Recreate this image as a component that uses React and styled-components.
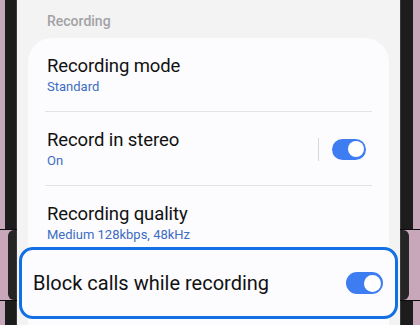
import React from "react";
import styled, { createGlobalStyle } from "styled-components";

const GlobalStyle = createGlobalStyle`
  html, body {
    margin: 0;
    padding: 0;
    background: #c9a7ba;
  }
  body {
    font-family: Roboto, "Noto Sans", "Liberation Sans", sans-serif;
    -webkit-font-smoothing: antialiased;
  }
`;

const Frame = styled.div`
  width: 420px;
  height: 325px;
  display: flex;
  overflow: hidden;
  background: #c9a7ba;
`;

const Bezel = styled.div`
  width: ${(p) => p.$width}px;
  display: flex;
  flex-direction: column;
  flex-shrink: 0;
`;

const BezelPart = styled.div`
  flex: ${(p) => (p.$height ? `0 0 ${p.$height}px` : "1")};
  display: flex;
  justify-content: ${(p) => (p.$side === "left" ? "flex-end" : "flex-start")};
  border-bottom: ${(p) => (p.$notch ? "1px solid #0c0c0c" : "none")};
  &::before {
    content: "";
    display: block;
    width: ${(p) => p.$dark}px;
    background: ${(p) => (p.$hinge ? "#252525" : "#1c1c1c")};
    border-radius: ${(p) => (p.$hinge ? (p.$side === "left" ? "6px 0 0 6px" : "0 6px 6px 0") : "0")};
    box-shadow: ${(p) =>
      p.$side === "left" ? "inset -1px 0 0 #3a3a3a" : "inset 1px 0 0 #3a3a3a"};
  }
`;

const Screen = styled.div`
  flex: 1;
  background: #f3f3f4;
  padding: 0 11px;
  display: flex;
  flex-direction: column;
  overflow: visible;
`;

const SectionLabel = styled.div`
  padding: 12px 0 0 19px;
  margin-bottom: 8px;
  font-size: 14px;
  line-height: 18px;
  font-weight: 500;
  color: #a2a2a4;
`;

const Card = styled.div`
  background: #fcfcfe;
  border-radius: 24px 24px 0 0;
  padding: 0 17px 20px;
  flex: 1;
`;

const Row = styled.div`
  display: flex;
  align-items: center;
  padding: ${(p) => (p.$last ? "16px 2px 3px" : "16px 2px 15px")};
  border-bottom: ${(p) => (p.$last ? "none" : "1px solid #e3e3e5")};
`;

const Texts = styled.div`
  flex: 1;
  display: flex;
  flex-direction: column;
`;

const Title = styled.div`
  font-size: 18.5px;
  line-height: 24px;
  color: #111;
  letter-spacing: -0.1px;
`;

const Sub = styled.div`
  font-size: 13px;
  line-height: 18px;
  color: #3d6dc1;
`;

const Separator = styled.div`
  width: 1px;
  height: 23px;
  background: #d6d6d8;
  margin-right: 13px;
`;

const Toggle = styled.div`
  width: ${(p) => (p.$big ? 37 : 34)}px;
  height: ${(p) => (p.$big ? 22 : 21)}px;
  border-radius: 12px;
  background: #3e7cf2;
  display: flex;
  align-items: center;
  justify-content: flex-end;
  padding: 0 2.5px;
  box-sizing: border-box;
  margin-right: ${(p) => (p.$big ? 0 : 4)}px;
  &::after {
    content: "";
    width: ${(p) => (p.$big ? 17 : 16)}px;
    height: ${(p) => (p.$big ? 17 : 16)}px;
    border-radius: 50%;
    background: #fff;
  }
`;

const Highlight = styled.div`
  margin: 0 -26px;
  height: 72px;
  box-sizing: border-box;
  border: 3px solid #1270e4;
  border-radius: 14px;
  background: #fcfcfe;
  display: flex;
  align-items: center;
  padding: 0 12px 0 11px;
`;

const BigTitle = styled.div`
  flex: 1;
  font-size: 20px;
  line-height: 26px;
  color: #111;
`;

const settings = [
  { title: "Recording mode", value: "Standard" },
  { title: "Record in stereo", value: "On", toggle: true },
  { title: "Recording quality", value: "Medium 128kbps, 48kHz" },
];

function Side({ side, width, dark, hingeDark }) {
  return (
    <Bezel $width={width}>
      <BezelPart $side={side} $dark={dark} $notch />
      <BezelPart $side={side} $dark={hingeDark} $height={70} $hinge $notch />
      <BezelPart $side={side} $dark={dark} $height={24} />
    </Bezel>
  );
}

export default function App() {
  return (
    <>
      <GlobalStyle />
      <Frame>
        <Side side="left" width={17} dark={12} hingeDark={9} />
        <Screen>
          <SectionLabel>Recording</SectionLabel>
          <Card>
            {settings.map((s, i) => (
              <Row key={s.title} $last={i === settings.length - 1}>
                <Texts>
                  <Title>{s.title}</Title>
                  <Sub>{s.value}</Sub>
                </Texts>
                {s.toggle && (
                  <>
                    <Separator />
                    <Toggle />
                  </>
                )}
              </Row>
            ))}
            <Highlight>
              <BigTitle>Block calls while recording</BigTitle>
              <Toggle $big />
            </Highlight>
          </Card>
        </Screen>
        <Side side="right" width={20} dark={13} hingeDark={9} />
      </Frame>
    </>
  );
}
